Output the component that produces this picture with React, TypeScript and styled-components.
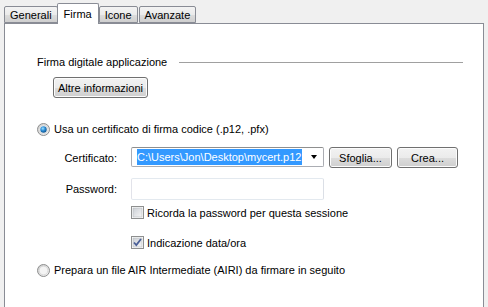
import React from "react";
import styled, { createGlobalStyle } from "styled-components";

const GlobalStyle = createGlobalStyle`
  html, body {
    margin: 0;
    padding: 0;
    background: #f0f0f0;
    font-family: "Liberation Sans", Arial, sans-serif;
    font-size: 11px;
    color: #000;
  }
`;

const Window = styled.div`
  width: 488px;
  height: 307px;
  overflow: hidden;
  display: flex;
  flex-direction: column;
`;

const TabBar = styled.div`
  display: flex;
  align-items: flex-end;
  height: 23px;
  padding-left: 4px;
  position: relative;
  z-index: 1;
`;

const Tab = styled.div<{ $active?: boolean }>`
  box-sizing: border-box;
  height: ${(p) => (p.$active ? "21px" : "17px")};
  margin-bottom: ${(p) => (p.$active ? "-1px" : "0")};
  margin-right: ${(p) => (p.$active ? "0" : "1px")};
  margin-left: ${(p) => (p.$active ? "-2px" : "0")};
  padding: ${(p) => (p.$active ? "3px 6px 0" : "1px 5px 0")};
  border: 1px solid #898c95;
  border-bottom: ${(p) => (p.$active ? "none" : "1px solid #898c95")};
  background: ${(p) =>
    p.$active ? "#ffffff" : "linear-gradient(#f3f3f3, #ebebeb 50%, #dddddd 51%, #cfcfcf)"};
  border-radius: 2px 2px 0 0;
  line-height: 14px;
  white-space: nowrap;
`;

const Panel = styled.div`
  flex: 1;
  margin: 0 4px;
  background: #ffffff;
  border: 1px solid #898c95;
  border-bottom: none;
  padding: 31px 0 0 32px;
  display: flex;
  flex-direction: column;
  align-items: flex-start;
`;

const SectionHeader = styled.div`
  display: flex;
  align-items: center;
  gap: 12px;
  width: 426px;
  height: 14px;
`;

const Rule = styled.div`
  flex: 1;
  height: 1px;
  background: #a0a0a0;
`;

const Button = styled.button<{ $w: number }>`
  box-sizing: border-box;
  width: ${(p) => p.$w}px;
  height: 21px;
  padding: 0;
  border: 1px solid #707070;
  border-radius: 3px;
  background: linear-gradient(#f2f2f2, #ebebeb 50%, #dddddd 51%, #cfcfcf);
  box-shadow: inset 0 0 0 1px #fcfcfc;
  font-family: inherit;
  font-size: 11px;
  color: #000;
`;

const InfoButton = styled(Button)`
  margin: 8px 0 0 16px;
`;

const Choice = styled.label<{ $top: number }>`
  display: flex;
  align-items: center;
  gap: 4px;
  margin-top: ${(p) => p.$top}px;
  height: 15px;
  line-height: 15px;
`;

const Form = styled.div`
  display: grid;
  grid-template-columns: 80px auto;
  column-gap: 14px;
  margin-top: 10px;
  align-items: center;
`;

const Label = styled.div<{ $top: number }>`
  text-align: right;
  margin-top: ${(p) => p.$top}px;
`;

const FieldRow = styled.div<{ $top: number }>`
  display: flex;
  gap: 5px;
  margin-top: ${(p) => p.$top}px;
`;

const Combo = styled.div`
  box-sizing: border-box;
  width: 193px;
  height: 20px;
  border: 1px solid #abadb3;
  border-top-color: #8e8f8f;
  border-radius: 2px;
  background: #fff;
  display: flex;
  align-items: center;
  padding: 0 0 0 5px;
`;

const Selected = styled.span`
  background: #3399ff;
  color: #fff;
  line-height: 16px;
  white-space: nowrap;
  padding-right: 1px;
`;

const Arrow = styled.span`
  margin-left: auto;
  margin-right: 6px;
  width: 0;
  height: 0;
  border-left: 3.5px solid transparent;
  border-right: 3.5px solid transparent;
  border-top: 4px solid #000;
`;

const TextBox = styled.div`
  box-sizing: border-box;
  width: 193px;
  height: 22px;
  border: 1px solid #abadb3;
  border-top-color: #e3e9ef;
  border-left-color: #e2e3ea;
  border-right-color: #dbdfe6;
  border-bottom-color: #e3e9ef;
  border-radius: 2px;
  background: #fff;
`;

const CheckRow = styled.div<{ $top: number }>`
  display: flex;
  align-items: center;
  gap: 3px;
  margin-top: ${(p) => p.$top}px;
  height: 13px;
`;

const RadioIcon = ({ checked }: { checked?: boolean }) => (
  <svg width="13" height="13" viewBox="0 0 13 13">
    <defs>
      <linearGradient id="rbg" x1="0" y1="0" x2="1" y2="1">
        <stop offset="0" stopColor="#cbcbcb" />
        <stop offset="1" stopColor="#f6f6f6" />
      </linearGradient>
      <radialGradient id="rdot" cx="0.4" cy="0.35" r="0.7">
        <stop offset="0" stopColor="#9ee2ff" />
        <stop offset="0.5" stopColor="#2a8ad4" />
        <stop offset="1" stopColor="#0d4f86" />
      </radialGradient>
    </defs>
    <circle cx="6.5" cy="6.5" r="6" fill="url(#rbg)" stroke="#8e8f8f" />
    <circle cx="6.5" cy="6.5" r="4.3" fill="#f4f4f4" stroke="#d0d0d0" strokeWidth="0.6" />
    {checked && <circle cx="6.5" cy="6.5" r="3.2" fill="url(#rdot)" />}
  </svg>
);

const CheckIcon = ({ checked }: { checked?: boolean }) => (
  <svg width="13" height="13" viewBox="0 0 13 13">
    <defs>
      <linearGradient id="cbg" x1="0" y1="0" x2="1" y2="1">
        <stop offset="0" stopColor="#cbcfd5" />
        <stop offset="1" stopColor="#f6f6f6" />
      </linearGradient>
    </defs>
    <rect x="0.5" y="0.5" width="12" height="12" fill="#fff" stroke="#8e8f8f" />
    <rect x="2" y="2" width="9" height="9" fill="url(#cbg)" stroke="#b4b8bd" strokeWidth="0.6" />
    {checked && (
      <path d="M3 6.5 L5.3 9 L10 3" fill="none" stroke="#4a5f97" strokeWidth="1.8" />
    )}
  </svg>
);

const App = () => (
  <Window>
    <GlobalStyle />
    <TabBar>
      <Tab>Generali</Tab>
      <Tab $active>Firma</Tab>
      <Tab>Icone</Tab>
      <Tab>Avanzate</Tab>
    </TabBar>
    <Panel>
      <SectionHeader>
        <span>Firma digitale applicazione</span>
        <Rule />
      </SectionHeader>
      <InfoButton $w={95}>Altre informazioni</InfoButton>
      <Choice $top={24}>
        <RadioIcon checked />
        Usa un certificato di firma codice (.p12, .pfx)
      </Choice>
      <Form>
        <Label $top={0}>Certificato:</Label>
        <FieldRow $top={0}>
          <Combo>
            <Selected>C:\Users\Jon\Desktop\mycert.p12</Selected>
            <Arrow />
          </Combo>
          <Button $w={63}>Sfoglia...</Button>
          <Button $w={61}>Crea...</Button>
        </FieldRow>
        <Label $top={10}>Password:</Label>
        <FieldRow $top={10}>
          <TextBox />
        </FieldRow>
        <div />
        <CheckRow $top={6}>
          <CheckIcon />
          Ricorda la password per questa sessione
        </CheckRow>
        <div />
        <CheckRow $top={17}>
          <CheckIcon checked />
          Indicazione data/ora
        </CheckRow>
      </Form>
      <Choice $top={14}>
        <RadioIcon />
        Prepara un file AIR Intermediate (AIRI) da firmare in seguito
      </Choice>
    </Panel>
  </Window>
);

export default App;
